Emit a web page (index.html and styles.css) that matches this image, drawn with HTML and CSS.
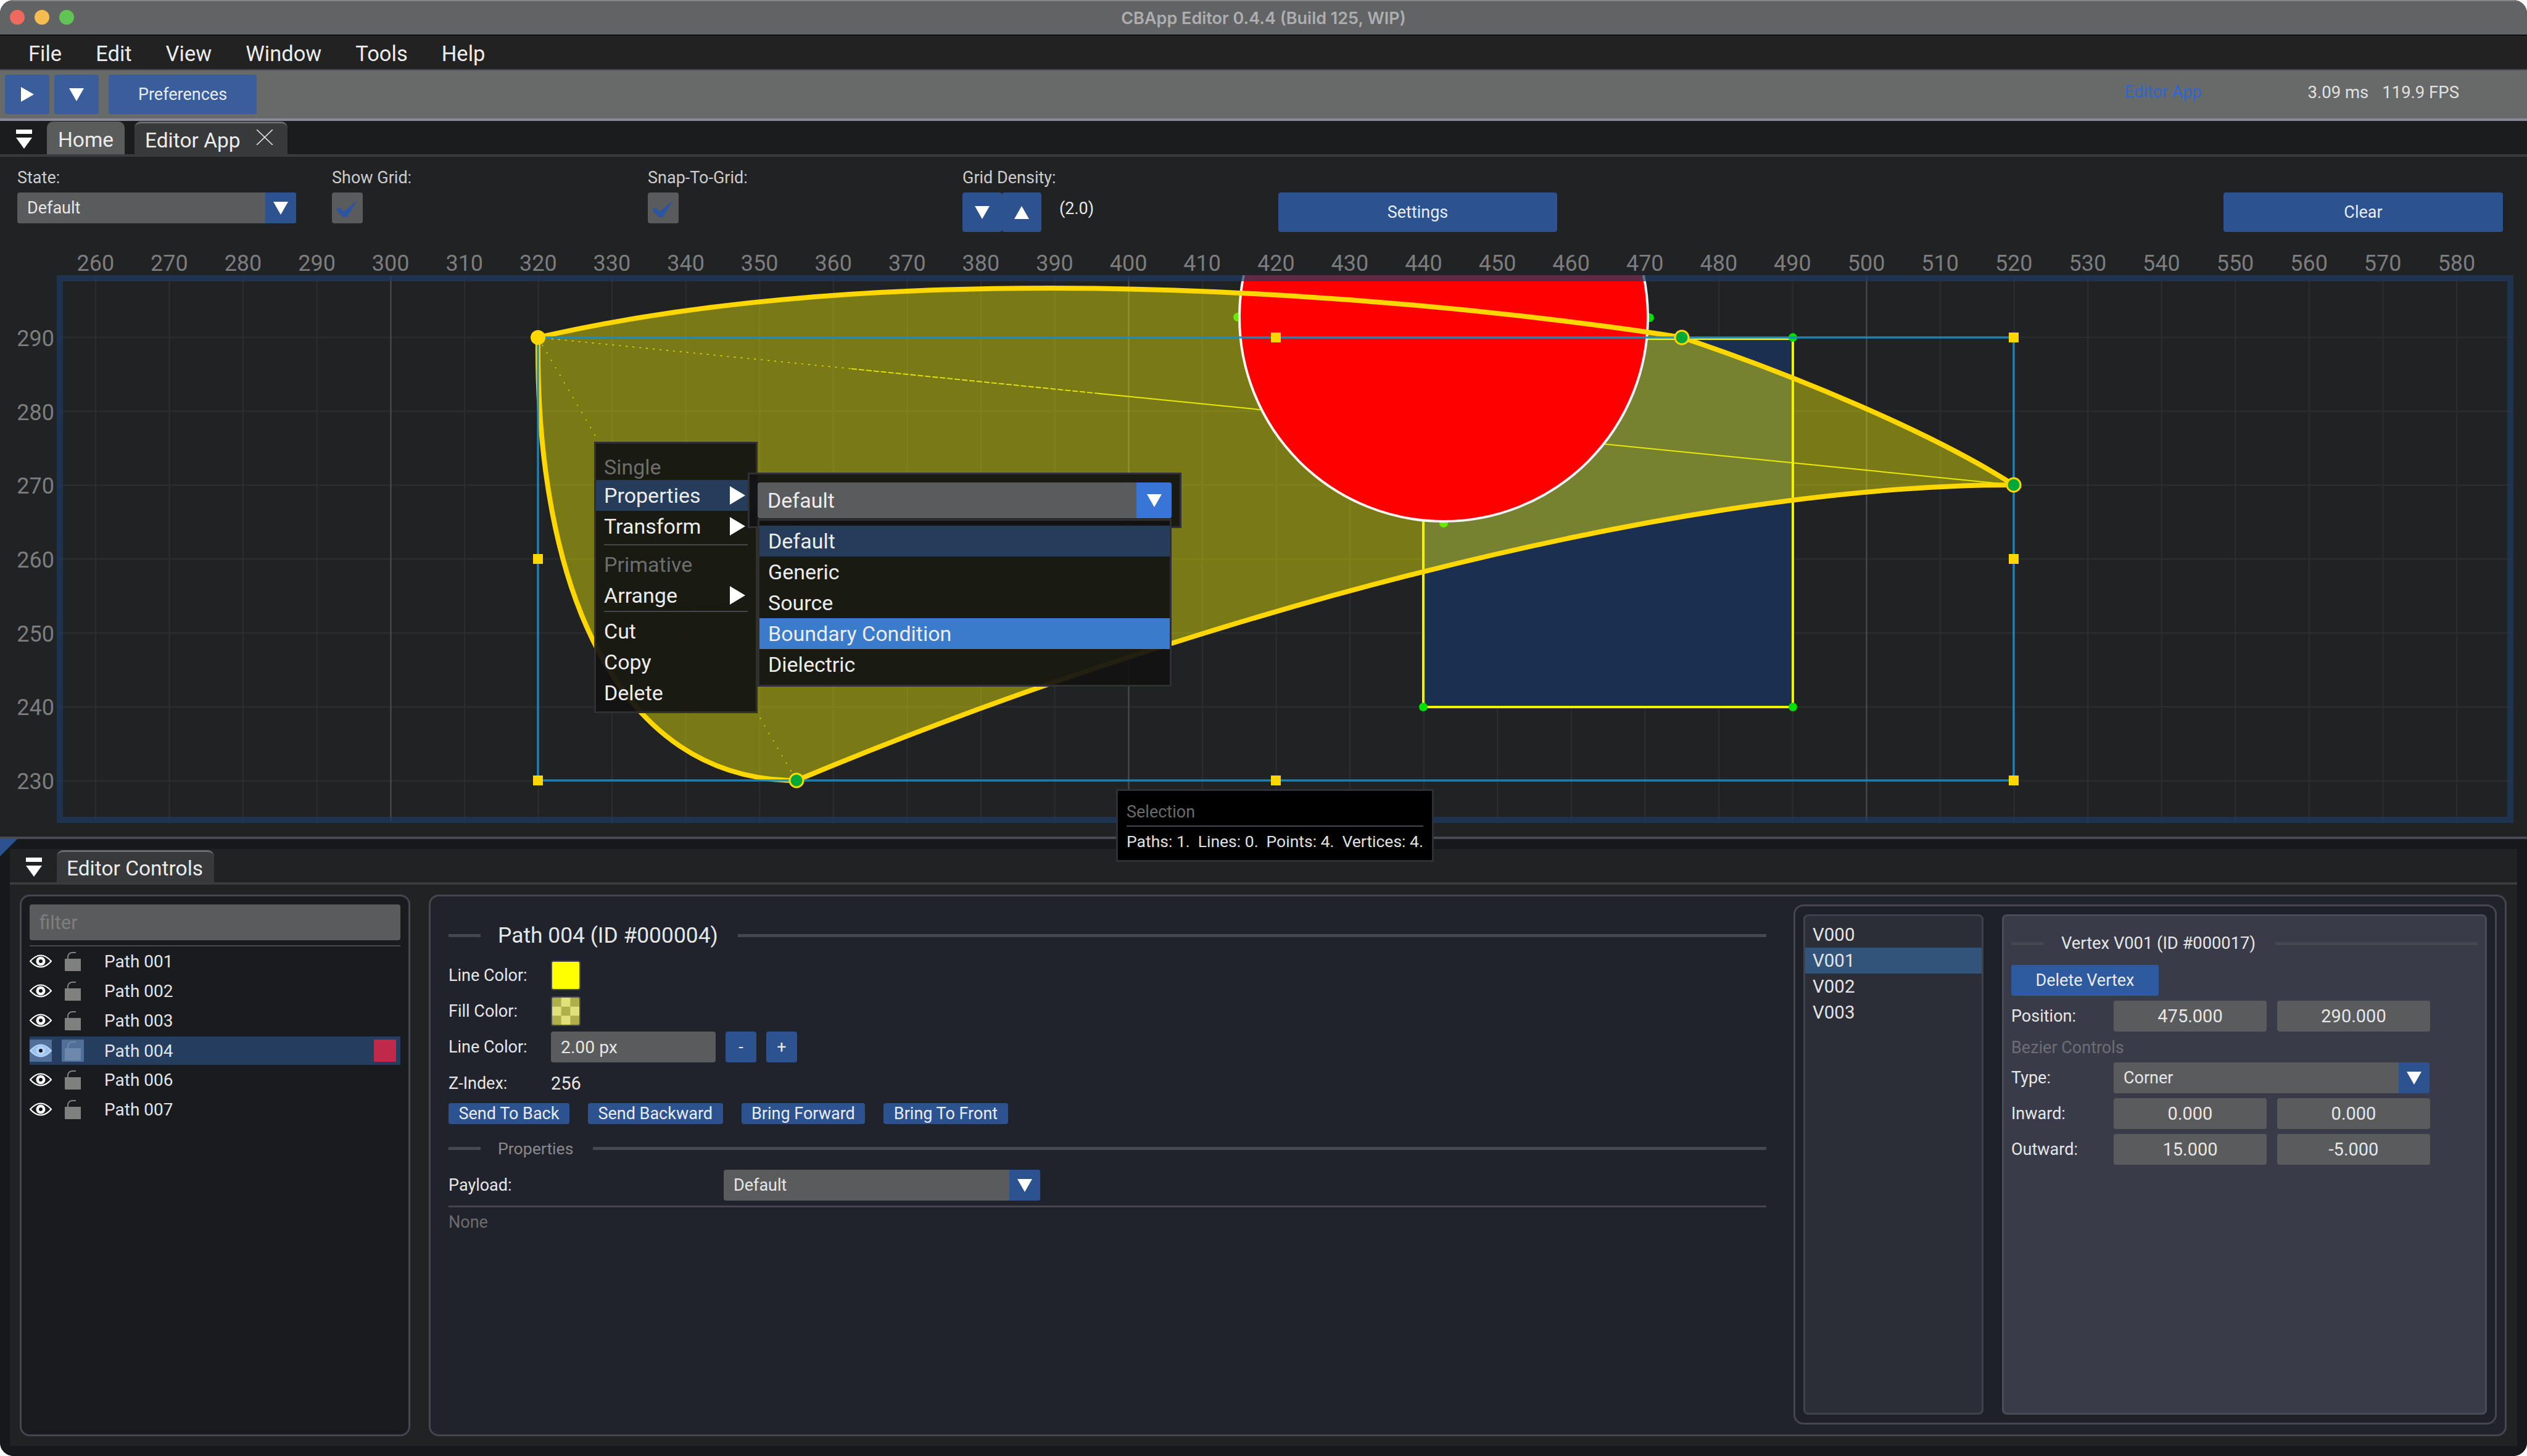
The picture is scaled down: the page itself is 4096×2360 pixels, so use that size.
FILE: index.html
```html
<!DOCTYPE html>
<html>
<head>
<meta charset="utf-8">
<title>CBApp Editor</title>
<link rel="stylesheet" href="styles.css">
</head>
<body>
<svg class="defs" width="0" height="0">
  <symbol id="eye" viewBox="0 0 36 24">
    <path class="eye-lens" d="M1 12 Q18 -7 35 12 Q18 31 1 12Z" stroke="currentColor" stroke-width="2.2"/>
    <circle cx="18" cy="12" r="7.5" fill="currentColor"/>
    <circle cx="18" cy="12" r="3" fill="#14151a"/>
  </symbol>
  <symbol id="lock" viewBox="0 0 26 31">
    <rect x="0" y="11" width="26" height="20" fill="currentColor"/>
    <path d="M5 11 V8 A7 7 0 0 1 12 1 H18" fill="none" stroke="currentColor" stroke-width="2"/>
  </symbol>
  <symbol id="check" viewBox="0 0 50 50">
    <polygon points="7,28 12,24 19,31 41,13 24,40 18,40" fill="#2a55a5"/>
  </symbol>
</svg>

<div class="window">
  <div class="titlebar">
    <div class="lights"><i class="light red"></i><i class="light amber"></i><i class="light green"></i></div>
    <div class="title">CBApp Editor 0.4.4 (Build 125, WIP)</div>
  </div>

  <div class="menubar">
    <span>File</span><span>Edit</span><span>View</span><span>Window</span><span>Tools</span><span>Help</span>
  </div>

  <div class="toolbar">
    <div class="btn tool-btn"><i class="tri-right"></i></div>
    <div class="btn tool-btn"><i class="tri-down"></i></div>
    <div class="btn pref-btn">Preferences</div>
    <span class="tb-app">Editor App</span>
    <span class="tb-stat">3.09 ms</span>
    <span class="tb-stat tb-fps">119.9 FPS</span>
  </div>

  <div class="tabbar">
    <div class="collapse"><b></b><i class="tri-down"></i></div>
    <div class="tab tab-home">Home</div>
    <div class="tab tab-open">Editor App
      <svg class="tab-x" width="28" height="25" viewBox="0 0 28 25"><path d="M1 0 L27 25 M27 0 L1 25" stroke="#e8e8e8" stroke-width="1.6"/></svg>
    </div>
  </div>

  <div class="editor">
    <div class="controls">
      <div class="ctl ctl-state">
        <div class="ctl-label">State:</div>
        <div class="combo combo-state"><span>Default</span><div class="combo-arrow"><i class="tri-down"></i></div></div>
      </div>
      <div class="ctl ctl-grid">
        <div class="ctl-label">Show Grid:</div>
        <div class="checkbox"><svg width="50" height="50"><use href="#check"/></svg></div>
      </div>
      <div class="ctl ctl-snap">
        <div class="ctl-label">Snap-To-Grid:</div>
        <div class="checkbox"><svg width="50" height="50"><use href="#check"/></svg></div>
      </div>
      <div class="ctl ctl-density">
        <div class="ctl-label">Grid Density:</div>
        <div class="density">
          <div class="btn density-btn"><i class="tri-down"></i></div>
          <div class="btn density-btn"><i class="tri-up"></i></div>
          <span class="density-val">(2.0)</span>
        </div>
      </div>
      <div class="btn wide-btn">Settings</div>
      <div class="btn wide-btn clear-btn">Clear</div>
    </div>

    <div class="ruler">
      <span>260</span><span>270</span><span>280</span><span>290</span><span>300</span><span>310</span><span>320</span><span>330</span><span>340</span><span>350</span><span>360</span><span>370</span><span>380</span><span>390</span><span>400</span><span>410</span><span>420</span><span>430</span><span>440</span><span>450</span><span>460</span><span>470</span><span>480</span><span>490</span><span>500</span><span>510</span><span>520</span><span>530</span><span>540</span><span>550</span><span>560</span><span>570</span><span>580</span>
    </div>

    <div class="canvas-row">
      <div class="yaxis">
        <span>290</span><span>280</span><span>270</span><span>260</span><span>250</span><span>240</span><span>230</span>
      </div>
      <svg class="canvas" width="3982" height="888" viewBox="92 446 3982 888">
        <defs>
          <pattern id="cells" patternUnits="userSpaceOnUse" x="871.5" y="545.7" width="119.6" height="119.8">
            <rect width="2" height="119.8" fill="#2c2d30"/>
            <rect width="119.6" height="2" fill="#2c2d30"/>
          </pattern>
          <clipPath id="inside"><rect x="92" y="446" width="3982" height="888"/></clipPath>
        </defs>

        <rect x="92" y="446" width="3982" height="888" fill="url(#cells)"/>
        <path d="M633.5 448 V1330 M1829.5 448 V1330 M3025.5 448 V1330" stroke="#4b4c4f" stroke-width="2"/>

        <!-- blue rectangle -->
        <rect x="2307" y="549" width="599" height="597" fill="#1b3050"/>
        <circle cx="2006" cy="514" r="7" fill="#00e000"/>
        <circle cx="2674" cy="515" r="7" fill="#00e000"/>
        <circle cx="2340" cy="848" r="7" fill="#00e000"/>

        <!-- path 004 fill and its triangles -->
        <path d="M872 547 C1654 367 2726 547 2726 547 C2905 607 3130 700 3264 786 C2700 786 1900 1010 1291 1265 C1000 1265 868 950 872 547Z" fill="rgba(255,255,0,.4)"/>
        <g stroke="#e8e800" fill="none">
          <path d="M872 547 L1380 597.7" stroke-width="1.4" stroke-dasharray="3 8"/>
          <path d="M1380 597.7 L1780 637.7" stroke-width="1.8" stroke-dasharray="9 3"/>
          <path d="M1780 637.7 L3264 786" stroke-width="2"/>
          <path d="M872 547 L1291 1265" stroke-width="1.5" stroke-dasharray="2 12"/>
        </g>

        <rect x="2307" y="549" width="599" height="597" fill="none" stroke="#f2f200" stroke-width="4"/>
        <circle cx="2906" cy="547" r="7" fill="#00e000"/>
        <circle cx="2307" cy="1146" r="7" fill="#00e000"/>
        <circle cx="2906" cy="1146" r="7" fill="#00e000"/>

        <circle cx="2340" cy="514" r="331" fill="#ff0000" stroke="#f4f4f4" stroke-width="4" clip-path="url(#inside)"/>
        <rect x="97" y="451" width="3972" height="878" fill="none" stroke="rgba(30,58,99,.7)" stroke-width="10"/>

        <!-- outline on top of circle -->
        <path d="M872 547 C1654 367 2726 547 2726 547 C2905 607 3130 700 3264 786 C2700 786 1900 1010 1291 1265 C1000 1265 868 950 872 547Z" fill="none" stroke="#ffd700" stroke-width="8"/>

        <!-- selection box -->
        <rect x="872" y="547" width="2392" height="718" fill="none" stroke="#1a8cc4" stroke-width="3.5" opacity=".9"/>
        <g fill="#ffd700">
          <rect x="864" y="898" width="16" height="16"/>
          <rect x="2060" y="539" width="16" height="16"/>
          <rect x="3256" y="539" width="16" height="16"/>
          <rect x="3256" y="898" width="16" height="16"/>
          <rect x="864" y="1257" width="16" height="16"/>
          <rect x="2060" y="1257" width="16" height="16"/>
          <rect x="3256" y="1257" width="16" height="16"/>
        </g>

        <!-- vertices -->
        <circle cx="872" cy="547" r="12" fill="#ffd700"/>
        <g fill="#00a838" stroke="#ffd700" stroke-width="3">
          <circle cx="2726" cy="547" r="11"/>
          <circle cx="3264" cy="786" r="11"/>
          <circle cx="1291" cy="1265" r="11"/>
        </g>
      </svg>
    </div>
  </div>

  <div class="dock">
    <i class="dock-corner"></i>
    <div class="dock-inner">
      <div class="dock-tabs">
        <div class="collapse"><b></b><i class="tri-down"></i></div>
        <div class="tab tab-open tab-dock">Editor Controls</div>
      </div>
      <div class="dock-body">
        <div class="paths-panel">
          <div class="filter">filter</div>
          <div class="rule"></div>
          <div class="path-row"><svg class="eye"><use href="#eye"/></svg><svg class="lock"><use href="#lock"/></svg><span>Path 001</span></div>
          <div class="path-row"><svg class="eye"><use href="#eye"/></svg><svg class="lock"><use href="#lock"/></svg><span>Path 002</span></div>
          <div class="path-row"><svg class="eye"><use href="#eye"/></svg><svg class="lock"><use href="#lock"/></svg><span>Path 003</span></div>
          <div class="path-row selected"><svg class="eye"><use href="#eye"/></svg><svg class="lock"><use href="#lock"/></svg><span>Path 004</span><i class="del-mark"></i></div>
          <div class="path-row"><svg class="eye"><use href="#eye"/></svg><svg class="lock"><use href="#lock"/></svg><span>Path 006</span></div>
          <div class="path-row"><svg class="eye"><use href="#eye"/></svg><svg class="lock"><use href="#lock"/></svg><span>Path 007</span></div>
        </div>

        <div class="props-panel">
          <div class="props">
            <div class="heading"><span>Path 004 (ID #000004)</span></div>
            <div class="form-row swatch-row first"><label>Line Color:</label><i class="swatch swatch-line"></i></div>
            <div class="form-row swatch-row fill"><label>Fill Color:</label><i class="swatch swatch-fill"></i></div>
            <div class="form-row width-row">
              <label>Line Color:</label>
              <div class="field width-field">2.00 px</div>
              <div class="btn step-btn">-</div>
              <div class="btn step-btn">+</div>
            </div>
            <div class="form-row z-row"><label>Z-Index:</label><span class="digits">256</span></div>
            <div class="order-row">
              <div class="btn order-btn">Send To Back</div>
              <div class="btn order-btn">Send Backward</div>
              <div class="btn order-btn">Bring Forward</div>
              <div class="btn order-btn">Bring To Front</div>
            </div>
            <div class="heading heading-dim"><span>Properties</span></div>
            <div class="form-row payload-row">
              <label>Payload:</label>
              <div class="combo combo-payload"><span>Default</span><div class="combo-arrow"><i class="tri-down"></i></div></div>
            </div>
            <div class="rule rule-3"></div>
            <div class="none-row">None</div>
          </div>

          <div class="vertex-panel">
            <div class="vertex-list">
              <div>V000</div>
              <div class="selected">V001</div>
              <div>V002</div>
              <div>V003</div>
            </div>
            <div class="vertex-detail">
              <div class="heading heading-small"><span>Vertex V001 (ID #000017)</span></div>
              <div class="btn delete-btn">Delete Vertex</div>
              <div class="form-row vx-row pos-row"><label>Position:</label><div class="field num">475.000</div><div class="field num">290.000</div></div>
              <div class="bezier-head">Bezier Controls</div>
              <div class="form-row vx-row type-row"><label>Type:</label><div class="combo combo-type"><span>Corner</span><div class="combo-arrow"><i class="tri-down"></i></div></div></div>
              <div class="form-row vx-row"><label>Inward:</label><div class="field num">0.000</div><div class="field num">0.000</div></div>
              <div class="form-row vx-row"><label>Outward:</label><div class="field num">15.000</div><div class="field num">-5.000</div></div>
            </div>
          </div>
        </div>
      </div>
    </div>
  </div>

  <!-- popups -->
  <div class="menu context-menu">
    <div class="menu-head">Single</div>
    <div class="menu-item active">Properties<i class="tri-right"></i></div>
    <div class="menu-item">Transform<i class="tri-right"></i></div>
    <div class="menu-sep"></div>
    <div class="menu-item dim">Primative</div>
    <div class="menu-item">Arrange<i class="tri-right"></i></div>
    <div class="menu-sep sep-tight"></div>
    <div class="menu-item">Cut</div>
    <div class="menu-item">Copy</div>
    <div class="menu-item">Delete</div>
  </div>
  <div class="menu sub-menu">
    <div class="combo combo-sub"><span>Default</span><div class="combo-arrow bright"><i class="tri-down"></i></div></div>
  </div>
  <div class="menu drop-list">
    <div class="menu-item active">Default</div>
    <div class="menu-item">Generic</div>
    <div class="menu-item">Source</div>
    <div class="menu-item hot">Boundary Condition</div>
    <div class="menu-item">Dielectric</div>
  </div>
  <div class="tip">
    <div class="tip-head">Selection</div>
    <div class="rule"></div>
    <div class="tip-body"><span>Paths: 1.</span><span>Lines: 0.</span><span>Points: 4.</span><span>Vertices: 4.</span></div>
  </div>
</div>
</body>
</html>
```

FILE: styles.css
```css
* { box-sizing: border-box; }
html, body { margin: 0; padding: 0; background: #fff; }
body { font-family: Roboto, Inter, "Liberation Sans", sans-serif; font-size: 27px; color: #e6e6e6; }
.defs { position: absolute; }
i { display: block; font-style: normal; }

.window { position: relative; width: 4096px; height: 2360px; overflow: hidden; border-radius: 22px; background: #212224; }

/* title bar */
.titlebar { height: 58px; background: #626365; border-top: 2px solid #868789; border-bottom: 2px solid #0c0c0c; display: flex; align-items: center; justify-content: center; position: relative; }
.lights { position: absolute; left: 16px; top: 14px; display: flex; gap: 16px; }
.light { width: 24px; height: 24px; border-radius: 50%; }
.light.red { background: #ee6a5f; }
.light.amber { background: #f5bd4f; }
.light.green { background: #61c454; }
.title { font-family: Inter, sans-serif; font-size: 27px; font-weight: 600; color: #adaeaf; }

.menubar { height: 56px; background: #222222; border-bottom: 2px solid #474850; display: flex; align-items: center; padding: 3px 0 0 46px; gap: 55px; font-size: 34.5px; color: #ececec; }

.toolbar { height: 82px; background: #686a69; border-bottom: 4px solid #8a8a98; display: flex; align-items: center; padding: 0 110px 0 8px; font-size: 27px; }
.btn { background: #2c5290; border-radius: 4px; display: flex; align-items: center; justify-content: center; color: #e8ecf4; flex: none; }
.tool-btn { width: 72px; height: 64px; background: #3a5e9c; margin-right: 8px; }
.pref-btn { width: 240px; height: 64px; background: #3a5e9c; margin-left: 8px; }
.tb-app { margin-left: auto; margin-right: 172px; color: #2f66d0; position: relative; top: -4px; }
.tb-stat { color: #e0e0e0; position: relative; top: -4px; font-size: 27.5px; }
.tb-fps { margin-left: 22px; }

.tri-right { width: 0; height: 0; border-style: solid; border-width: 12px 0 12px 21px; border-color: transparent transparent transparent #fff; }
.tri-down { width: 0; height: 0; border-style: solid; border-width: 21px 12px 0 12px; border-color: #fff transparent transparent transparent; }
.tri-up { width: 0; height: 0; border-style: solid; border-width: 0 12px 21px 12px; border-color: transparent transparent #fff transparent; }

.tabbar { height: 58px; background: #1b1c1e; border-bottom: 4px solid #3a3b3e; display: flex; align-items: flex-end; padding-left: 26px; }
.collapse { width: 26px; align-self: flex-start; padding-top: 14px; flex: none; }
.collapse b { display: block; height: 7px; background: #fff; margin-bottom: 6px; }
.collapse .tri-down { border-width: 18px 13px 0 13px; }
.tab { height: 53px; border-radius: 10px 10px 0 0; display: flex; align-items: center; padding-top: 5px; font-size: 33.5px; color: #ececec; flex: none; }
.tab-home { width: 126px; margin-left: 24px; background: #5a5b5b; justify-content: center; }
.tab-open { width: 248px; margin-left: 16px; padding-left: 17px; background: #38393b; border-top: 3px solid #6b6c6e; }
.tab-x { margin-left: auto; margin-right: 23px; position: relative; top: -5px; }

/* top controls */
.editor { height: 1102px; background: #212224; }
.controls { height: 142px; display: flex; padding: 18px 39px 0 28px; }
.ctl { flex: none; }
.ctl-state { width: 510px; }
.ctl-grid { width: 512px; }
.ctl-snap { width: 510px; }
.ctl-density { width: 512px; }
.ctl-label { height: 32px; margin-bottom: 8px; color: #cccccc; line-height: 32px; }
.combo { display: flex; align-items: center; background: #5a5b5c; border-radius: 4px; padding-left: 16px; height: 50px; overflow: hidden; }
.combo span { flex: 1; }
.combo-arrow { align-self: stretch; background: #2c5290; display: flex; align-items: center; justify-content: center; width: 50px; }
.combo-state { width: 452px; }
.checkbox { width: 50px; height: 50px; background: #5a5b5c; border-radius: 4px; }
.checkbox svg { display: block; }
.density { display: flex; align-items: center; height: 64px; }
.density-btn { width: 64px; height: 64px; }
.density-val { margin-left: 29px; position: relative; top: -6px; }
.wide-btn { width: 452px; height: 64px; margin-top: 40px; }
.clear-btn { margin-left: auto; width: 453px; }

.ruler { height: 50px; padding: 10px 0 0 95px; display: grid; grid-auto-flow: column; grid-auto-columns: 119.6px; justify-content: start; justify-items: center; font-size: 36px; line-height: 42px; color: #7c7d7e; }

.canvas-row { display: flex; height: 888px; }
.yaxis { width: 92px; padding-top: 43px; display: grid; grid-auto-rows: 119.7px; align-content: start; align-items: center; justify-items: end; padding-right: 4px; font-size: 36px; color: #7c7d7e; }
.canvas { display: block; flex: none; }

/* bottom dock */
.dock { position: relative; height: 1004px; border-top: 4px solid #4a4a55; background: #17181c; padding: 16px; }
.dock-corner { position: absolute; left: 0; top: 0; width: 28px; height: 28px; background: #2c5290; clip-path: polygon(0 0, 100% 0, 0 100%); }
.dock-inner { height: 968px; background: #212224; }
.dock-tabs { height: 58px; border-bottom: 4px solid #3a3b3e; display: flex; align-items: flex-end; padding-left: 26px; }
.dock-tabs .collapse { padding-top: 14px; }
.tab-dock { width: 255px; margin-left: 24px; padding-left: 16px; height: 52px; padding-top: 3px; }
.dock-body { display: flex; gap: 30px; padding: 16px 17px 16px 16px; height: 910px; }

.paths-panel { width: 633px; flex: none; background: #1a1b1e; border: 3px solid #45464f; border-radius: 16px; padding: 13px; }
.filter { height: 58px; background: #5a5b5c; border-radius: 4px; padding-left: 16px; display: flex; align-items: center; font-size: 31px; color: #7e7f80; }
.rule { height: 2px; background: #45464f; margin-top: 8px; }
.path-row { height: 48px; display: flex; align-items: center; font-size: 28px; color: #e4e4e4; }
.path-row span { margin-left: 33px; }
.eye { width: 36px; height: 24px; color: #fff; flex: none; }
.eye-lens { fill: var(--lens, none); }
.lock { width: 36px; height: 31px; padding: 0 5px; color: #808080; margin-left: 16px; flex: none; }
.path-row.selected { background: #253d5f; background-clip: padding-box; border-top: 2px solid transparent; }
.path-row.selected .eye { height: 36px; background: #50709a; color: #b4d4f8; padding: 6px 0; --lens: #9cc0ec; }
.path-row.selected .lock { height: 36px; padding: 3px 5px 2px; background: #50709a; color: #6d88aa; }
.del-mark { width: 36px; height: 36px; background: #c0294a; margin-left: auto; margin-right: 7px; }

.props-panel { flex: 1; background: #20232b; border: 3px solid #45464f; border-radius: 16px; padding: 13px 13px 16px 29px; display: flex; }
.props { flex: 1; padding-top: 30px; margin-right: 44px; }
.heading { height: 40px; display: flex; align-items: center; font-size: 35.4px; color: #e6e6e6; }
.heading::before { content: ""; width: 52px; height: 5px; background: #454751; margin-right: 28px; }
.heading::after { content: ""; flex: 1; height: 5px; background: #454751; margin-left: 32px; }
.heading-dim { margin-top: 19px; font-size: 26.6px; color: #8a8a8a; }
.form-row { display: flex; align-items: center; }
.form-row label { width: 166px; flex: none; }
.digits { font-size: 29px; }
.swatch-row { height: 48px; }
.swatch-row.first { margin-top: 21px; }
.swatch-row.fill { margin-top: 10px; }
.swatch { width: 48px; height: 48px; border: 2px solid #4a4b4d; border-radius: 4px; }
.swatch-line { background: #ffff00; }
.swatch-fill { background: repeating-conic-gradient(#e0e07c 0 25%, #b0b04a 0 50%) 0 0 / 29.33px 29.33px; }
.width-row { height: 50px; margin-top: 9px; }
.field { background: #5a5b5c; border-radius: 4px; height: 50px; display: flex; align-items: center; }
.width-field { width: 267px; padding-left: 16px; font-size: 28.3px; }
.step-btn { width: 50px; height: 50px; margin-left: 16px; }
.z-row { height: 36px; margin-top: 16px; }
.order-row { display: flex; gap: 30px; margin-top: 14px; }
.order-btn { height: 34px; width: auto; padding: 0 16.5px; }
.payload-row { height: 50px; margin-top: 15px; }
.payload-row label { width: 446px; }
.combo-payload { width: 513px; }
.rule-3 { height: 3px; margin-top: 8px; }
.none-row { height: 36px; margin-top: 6px; display: flex; align-items: center; color: #6c6d6e; }

.vertex-panel { width: 1140px; flex: none; background: #1f2129; border: 3px solid #45464f; border-radius: 16px; padding: 13px; display: flex; gap: 30px; }
.vertex-list { width: 292px; flex: none; background: #2b2e37; border: 3px solid #3f424d; border-radius: 8px; padding-top: 9px; font-size: 29.5px; }
.vertex-list div { height: 42px; padding-left: 12px; display: flex; align-items: center; color: #e4e4e4; }
.vertex-list .selected { background: #33547a; }
.vertex-detail { flex: 1; background: #393c48; border: 3px solid #4a4d59; border-radius: 8px; padding: 24px 12px 0; }
.heading-small { font-size: 27.3px; }
.heading-small::before { margin-right: 29px; }
.delete-btn { width: 239px; height: 50px; margin-top: 15px; background: #2e5a9f; }
.vx-row { height: 50px; margin-top: 8px; }
.num { width: 248px; justify-content: center; margin-right: 17px; font-size: 29px; }
.bezier-head { height: 34px; margin-top: 9px; display: flex; align-items: center; color: #6c6e75; }
.type-row { margin-top: 7px; }
.combo-type { width: 512px; }

/* popups */
.menu { position: absolute; background: rgba(18, 18, 18, .93); border: 3px solid #2f3033; font-size: 34px; color: #ececec; }
.context-menu { left: 963px; top: 716px; width: 265px; height: 440px; padding-top: 13px; }
.menu-head { height: 46px; padding: 4px 0 0 13px; color: #6d6d6d; display: flex; align-items: center; }
.menu-item { height: 50px; padding: 0 17px 0 13px; display: flex; align-items: center; justify-content: space-between; }
.menu-item .tri-right { border-width: 15px 0 15px 25px; }
.menu-item.active { background: #253d5b; }
.menu-item.dim { color: #6d6d6d; }
.menu-item.hot { background: #3a7bcb; }
.menu-sep { height: 2px; background: #45464f; margin: 4px 13px 6px; }
.menu-sep.sep-tight { margin-top: 0; }
.sub-menu { left: 1212px; top: 766px; width: 703px; height: 90px; padding: 13px; }
.combo-sub { width: 671px; height: 58px; }
.combo-arrow.bright { background: #3875d7; width: 57px; }
.drop-list { left: 1228px; top: 841px; width: 671px; height: 272px; padding-top: 8px; }
.drop-list .menu-item { padding-left: 14px; }

.tip { position: absolute; left: 1809px; top: 1279px; width: 515px; height: 118px; background: #000; border: 3px solid #2f3035; padding: 14px 14px 0; font-size: 27px; color: #e0e0e0; }
.tip-head { height: 40px; display: flex; align-items: center; color: #6a6a6a; }
.tip .rule { margin-top: 2px; }
.tip-body { display: flex; justify-content: space-between; margin-top: 8px; font-size: 26.5px; }
```
